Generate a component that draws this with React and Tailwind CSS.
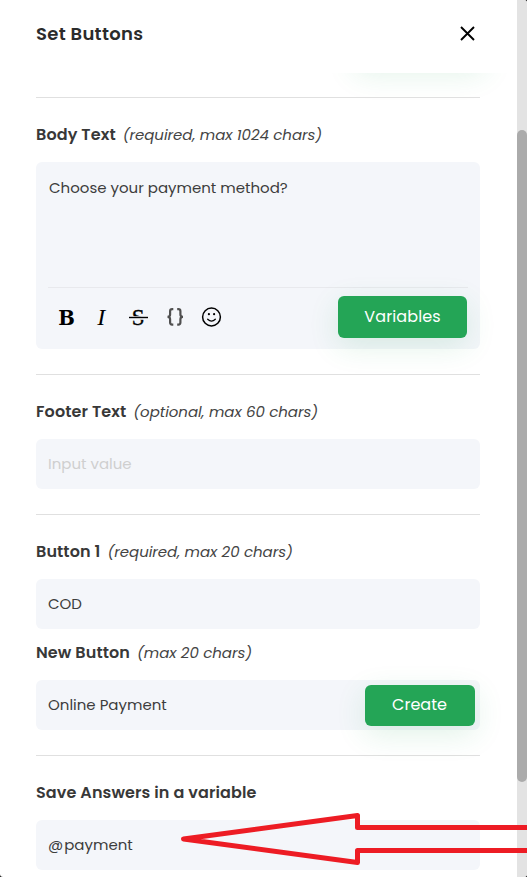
import { useState } from "react";

function Divider() {
	return <hr className="border-0 h-px w-full bg-[#e0e0e0]" />;
}

function Label({ title, hint }) {
	return (
		<div className="flex items-center h-6 mb-4 pt-0.5 gap-[7px] whitespace-nowrap">
			<span className="text-[16px] font-semibold tracking-[0.1px] text-[#383838]">
				{title}
			</span>
			{hint && (
				<span className="text-[15px] italic tracking-[-0.05px] text-[#444]">
					{hint}
				</span>
			)}
		</div>
	);
}

function Field({ children }) {
	return (
		<div className="flex items-center h-[50px] pl-3 pr-[5px] rounded-md bg-[#f4f6fa] text-[15px] text-[#3d3d3d]">
			{children}
		</div>
	);
}

function GreenButton({ children, className = "" }) {
	return (
		<button
			className={`flex items-center justify-center rounded-md bg-[#24a556] text-white text-base shadow-[0_8px_30px_rgba(36,165,86,0.14)] ${className}`}>
			{children}
		</button>
	);
}

function FormatIcons() {
	return (
		<svg width="180" height="30" viewBox="48 302 180 30" className="-mt-px">
			<text
				x="58.2"
				y="325"
				fontSize="21"
				fontWeight="700"
				textLength="16.6"
				lengthAdjust="spacingAndGlyphs"
				className="font-['DejaVu_Serif',serif]">
				B
			</text>
			<text
				x="97.2"
				y="325"
				fontSize="24"
				fontStyle="italic"
				className="font-['Liberation_Serif',serif]">
				I
			</text>
			<text
				x="131.8"
				y="325"
				fontSize="23"
				stroke="#000"
				strokeWidth="0.4"
				className="font-['Liberation_Serif',serif]">
				S
			</text>
			<path d="M131 318h15" stroke="#f4f6fa" strokeWidth="3.6" />
			<path d="M129 317.5h19" stroke="#000" strokeWidth="1.4" />
			<g fill="none" stroke="#505050" strokeWidth="2.2">
				<path d="M173.3 309.2h-1.2q-2 0-2 2v3.4q0 2.3-2.6 2.3 2.6 0 2.6 2.3v3.4q0 2 2 2h1.2" />
				<path d="M177.2 309.2h1.2q2 0 2 2v3.4q0 2.3 2.6 2.3-2.6 0-2.6 2.3v3.4q0 2-2 2h-1.2" />
			</g>
			<circle
				cx="211.5"
				cy="317"
				r="8.9"
				fill="none"
				stroke="#000"
				strokeWidth="1.5"
			/>
			<circle cx="208.9" cy="314.2" r="1.1" />
			<circle cx="214.1" cy="314.2" r="1.1" />
			<path
				d="M207.7 319.2q3.8 3.8 7.6 0"
				fill="none"
				stroke="#000"
				strokeWidth="1.3"
				strokeLinecap="round"
			/>
		</svg>
	);
}

function BodyEditor() {
	return (
		<div className="flex flex-col h-[187px] px-3 pt-3 rounded-md bg-[#f4f6fa]">
			<p className="h-[113px] pl-px pt-[2px] text-[15px] leading-6 text-[#3d3d3d] whitespace-nowrap">
				Choose your payment method?
			</p>
			<hr className="border-0 h-px w-full bg-[#e8e9ed]" />
			<div className="flex items-center pt-2">
				<FormatIcons />
				<GreenButton className="w-[129px] h-[42px] ml-auto mr-px tracking-[0.1px]">
					Variables
				</GreenButton>
			</div>
		</div>
	);
}

export default function App() {
	const [footer] = useState("");

	return (
		<div className="relative w-[527px] h-[877px] overflow-hidden bg-[#1a1a1a] font-[Poppins,Inter,sans-serif]">
			<div className="flex h-full rounded-tr-[3px] rounded-b-[3px] overflow-hidden bg-white">
				<div className="flex flex-col w-[517px] h-full">
					<header className="flex items-center justify-between h-[73px] pl-9 pr-[42px] pb-1.5 shrink-0">
						<h1 className="text-[18px] tracking-[0.3px] font-semibold text-[#2b2b2b]">
							Set Buttons
						</h1>
						<svg
							width="15"
							height="15"
							viewBox="0 0 15 15"
							stroke="#000"
							strokeWidth="1.9">
							<path d="M1 1l13 13M14 1L1 14" />
						</svg>
					</header>

					<main className="flex-1 overflow-hidden pl-9 pr-[37px]">
						<GreenButton className="w-[129px] h-[42px] -mt-[50px] mb-[32px] ml-auto -mr-1" />
						<Divider />
						<div className="pt-6 pb-[25px]">
							<Label title="Body Text" hint="(required, max 1024 chars)" />
							<BodyEditor />
						</div>
						<Divider />
						<div className="pt-6 pb-[25px]">
							<Label title="Footer Text" hint="(optional, max 60 chars)" />
							<Field>
								<span className="text-[#cfcfcf]">{footer || "Input value"}</span>
							</Field>
						</div>
						<Divider />
						<div className="pt-6 pb-[25px]">
							<Label title="Button 1" hint="(required, max 20 chars)" />
							<Field>COD</Field>
							<div className="pt-[11px]">
								<Label title="New Button" hint="(max 20 chars)" />
								<Field>
									<span>Online Payment</span>
									<GreenButton className="w-[110px] h-[41px] ml-auto pr-px">
										Create
									</GreenButton>
								</Field>
							</div>
						</div>
						<Divider />
						<div className="pt-6">
							<Label title="Save Answers in a variable" />
							<Field>
								<span>@</span>
								<span className="ml-px">payment</span>
							</Field>
						</div>
					</main>
				</div>

				<div className="w-2.5 h-full pt-[130px] bg-[#e3e3e3]">
					<div className="h-[652px] rounded-full bg-[#ababab]" />
				</div>
			</div>

			{/* arrow annotation over the variable field */}
			<svg
				className="absolute left-0 top-0 pointer-events-none"
				width="527"
				height="877"
				fill="none"
				stroke="#ed1c24"
				strokeWidth="5"
				strokeLinejoin="round">
				<path d="M530 827.5H357.5V815.5L183.5 839 357.5 862.5V850.5H530" />
			</svg>
		</div>
	);
}
